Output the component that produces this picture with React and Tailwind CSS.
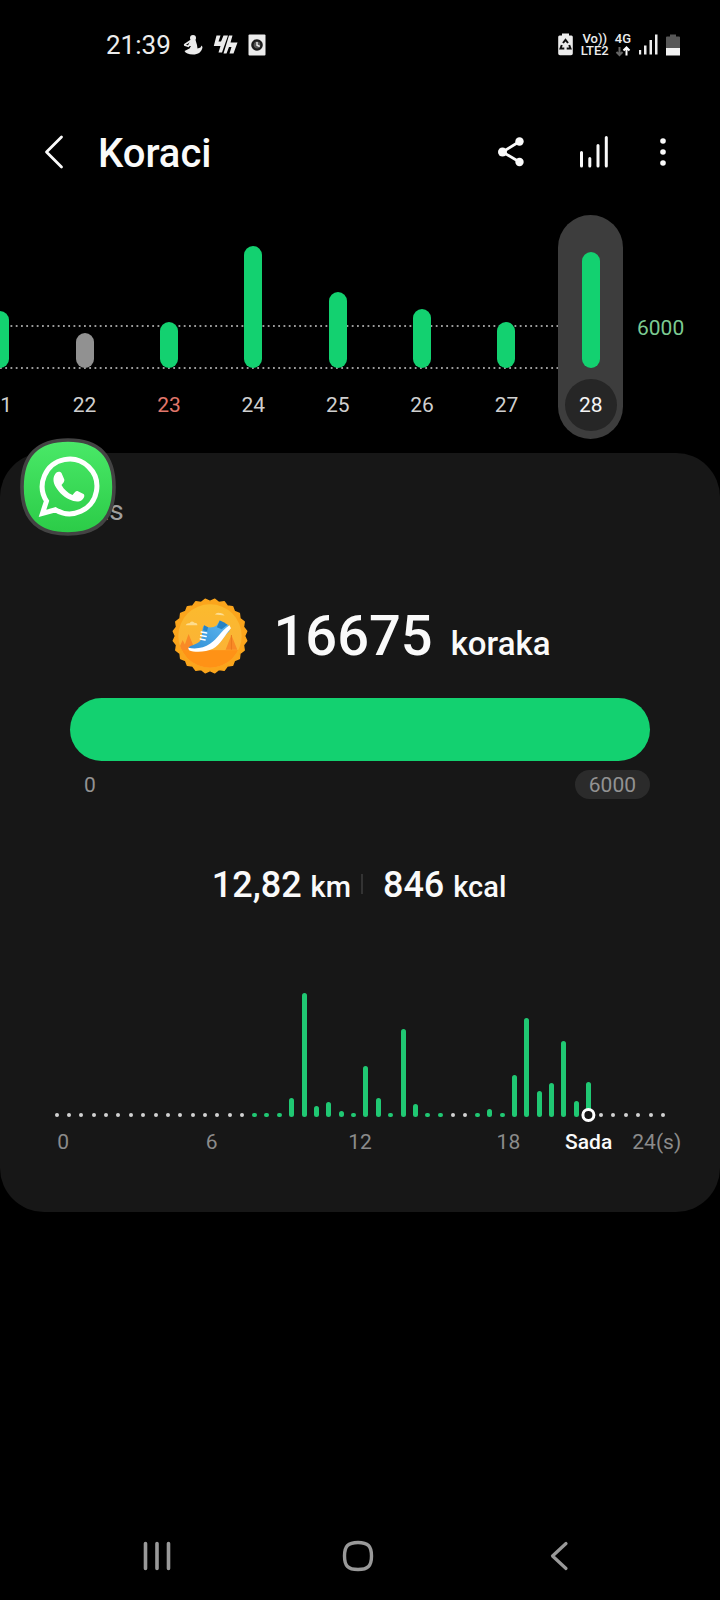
import React, { useState } from 'react';

const days = [
  { day: 21, height: 57 },
  { day: 22, height: 35, missed: true },
  { day: 23, height: 46, sunday: true },
  { day: 24, height: 122 },
  { day: 25, height: 76 },
  { day: 26, height: 59 },
  { day: 27, height: 46 },
  { day: 28, height: 116 },
];

// bar heights for the day, 0 means no steps in that slot
const slots = [
  0, 0, 0, 0, 0, 0, 0, 0, 0, 0, 0, 0, 0, 0, 0, 0,
  4, 4, 4, 19, 124, 11, 15, 6, 4, 51, 19, 4, 88, 13, 4, 4,
  0, 0, 4, 8, 4, 42, 99, 26, 34, 76, 16, 35,
  0, 0, 0, 0, 0, 0,
];
const nowSlot = 43;

function StatusBar() {
  return (
    <div className="h-[87px] pt-0.5 flex items-center justify-between pl-[106px] pr-10 text-[#ececec]">
      <div className="flex items-center">
        <span className="text-[26px] leading-8">21:39</span>
        <svg className="ml-3 w-5 h-[22px]" viewBox="0 0 20 22" fill="currentColor">
          <circle cx="10" cy="4" r="3" />
          <path d="M7.500 6 L12.500 6 L14 11 L14.500 14.500 L17.500 13.500 L18.500 11.500 L19.500 13 C19 18 15 20.500 10 20.500 C5.500 20.500 2.500 19 1.500 17 L6.500 14.500 L8 12 L4.500 12.500 Z" />
          <path d="M1.200 11 L8 6.500 M1.200 11 L6 12.500" fill="none" stroke="currentColor" strokeWidth="1.800" />
        </svg>
        <svg className="ml-2.5 w-[25px] h-[22px]" viewBox="0 0 25 22" fill="currentColor">
          <path d="M3.500 1.500 H7.500 L5.500 7.500 H8 L10.500 1.500 H15 L9 18.500 H5.500 L7.500 12 H0.800 Z" />
          <path d="M16 1.500 L10.500 19.500 H13.500 L16 13 H18.500 L16.500 19.500 H20.500 L24.500 8.500 H17.500 L19.500 1.500 Z" />
        </svg>
        <svg className="ml-2.5 w-[18px] h-[22px]" viewBox="0 0 18 22">
          <rect x="0.500" y="0.500" width="17" height="21" rx="1" fill="#ececec" />
          <circle cx="9" cy="11" r="5.800" fill="#1c1c1c" />
          <circle cx="9" cy="11" r="3.400" fill="#555" />
          <path d="M9 8 V11.200 L11.800 12.500" fill="none" stroke="#ececec" strokeWidth="1.400" />
        </svg>
      </div>
      <div className="flex items-center">
        <svg className="w-[15px] h-[23px]" viewBox="0 0 15 23">
          <path d="M4 0.500 H11 V2.500 H13.500 Q14.800 2.500 14.800 4 V20.500 Q14.800 22.300 13 22.300 H2 Q0.200 22.300 0.200 20.500 V4 Q0.200 2.500 1.500 2.500 H4 Z" fill="#ececec" />
          <g fill="none" stroke="#111" strokeWidth="2">
            <path d="M5 10 L7.500 6.800 L10 10" />
            <path d="M3.800 12 L2.500 15.500 H6.300" />
            <path d="M11.200 12 L12.500 15.500 H8.700" />
          </g>
        </svg>
        <div className="ml-2 flex flex-col items-center text-[13px] leading-3 font-medium">
          <span>Vo))</span>
          <span>LTE2</span>
        </div>
        <div className="ml-1.5 flex flex-col items-center">
          <span className="text-[13px] leading-3 font-medium">4G</span>
          <svg className="w-4 h-3" viewBox="0 0 16 12" fill="none" strokeWidth="2">
            <path d="M4.500 2 V10 M1.500 7 L4.500 10 L7.500 7" stroke="#666" />
            <path d="M11.500 10.500 V2.500 M8.500 5.500 L11.500 2.500 L14.500 5.500" stroke="#fff" />
          </svg>
        </div>
        <svg className="ml-2 w-[19px] h-[21px]" viewBox="0 0 19 21" fill="#ececec">
          <rect x="0" y="16" width="2.200" height="4.500" />
          <rect x="5" y="11.500" width="2.500" height="9" />
          <rect x="10.500" y="6" width="2.500" height="14.500" />
          <rect x="16" y="0.500" width="2.500" height="20" />
        </svg>
        <svg className="ml-2 w-3.5 h-[22px]" viewBox="0 0 14 22">
          <path d="M4 0.500 H10 V2.500 H13 Q14 2.500 14 3.500 V14 H0 V3.500 Q0 2.500 1 2.500 H4 Z" fill="#575757" />
          <path d="M0 14 H14 V21.500 H0 Z" fill="#f2f2f2" />
        </svg>
      </div>
    </div>
  );
}

function Header() {
  return (
    <header className="h-32 flex items-center pt-0.5 pl-11 pr-[51px]">
      <button type="button" aria-label="Natrag">
        <svg className="w-5 h-[34px]" viewBox="0 0 20 34" fill="none" stroke="#fafafa" strokeWidth="2.800" strokeLinecap="round" strokeLinejoin="round">
          <path d="M17.500 2 L2.500 17 L17.500 32" />
        </svg>
      </button>
      <h1 className="ml-[34px] pt-1 text-[40px] leading-12 font-medium text-[#fafafa] grow">Koraci</h1>
      <button type="button" aria-label="Dijeli">
        <svg className="w-7 h-[34px]" viewBox="0 0 28 34" fill="#fafafa">
          <path d="M22.500 6.500 L5.500 17 L22.500 27" fill="none" stroke="#fafafa" strokeWidth="2.800" />
          <circle cx="22.500" cy="6.500" r="4.200" />
          <circle cx="5.500" cy="17" r="4.500" />
          <circle cx="22.500" cy="27" r="4.200" />
        </svg>
      </button>
      <button type="button" aria-label="Grafikon" className="ml-[55px]">
        <svg className="w-7 h-[34px]" viewBox="0 0 28 34" stroke="#fafafa" strokeWidth="3" strokeLinecap="round">
          <path d="M1.500 17.500 V31 M9.800 23.500 V31 M18 10.500 V31 M26.300 2.500 V31" />
        </svg>
      </button>
      <button type="button" aria-label="Više opcija" className="ml-[49px]">
        <svg className="w-3 h-[34px]" viewBox="0 0 12 34" fill="#fafafa">
          <circle cx="6" cy="6" r="2.800" />
          <circle cx="6" cy="17" r="2.800" />
          <circle cx="6" cy="28" r="2.800" />
        </svg>
      </button>
    </header>
  );
}

function WeekChart() {
  const [selected, setSelected] = useState(28);

  return (
    <section className="flex overflow-hidden">
      <div className="relative grow -ml-[42px] grid grid-cols-8">
        <svg className="absolute inset-0 w-full h-full" stroke="#9a9a9a" strokeWidth="2" strokeDasharray="1.800 3.450">
          <line x1="0" y1="111" x2="100%" y2="111" />
          <line x1="0" y1="153" x2="100%" y2="153" />
        </svg>
        {/* keeps the dotted lines from running past the last day */}
        <span className="absolute right-0 top-0 w-2.5 h-full bg-black"></span>
        {days.map(d => {
          const active = d.day === selected;
          return (
            <button
              key={d.day}
              type="button"
              onClick={() => setSelected(d.day)}
              className={`relative justify-self-center w-[65px] h-56 pb-2 rounded-full flex flex-col items-center justify-end ${active ? 'bg-[#3d3d3d]' : ''}`}
            >
              <span className={`w-[18px] mb-[11px] rounded-full ${d.missed ? 'bg-[#919191]' : 'bg-[#13d170]'}`} style={{ height: d.height }}></span>
              <span className={`size-13 rounded-full flex items-center justify-center text-[21px] leading-7 ${active ? 'bg-[#262626] text-[#f5f5f5]' : d.sunday ? 'text-[#e2776b]' : 'text-[#cfcfcf]'}`}>
                {d.day}
              </span>
            </button>
          );
        })}
      </div>
      <span className="w-[87px] shrink-0 pl-1 mt-[99px] text-[21px] leading-7 text-[#7ccb92]">6000</span>
    </section>
  );
}

function Badge() {
  const points = Array.from({ length: 48 }, (_, i) => {
    const r = i % 2 ? 35.5 : 38;
    const a = ((i + 1) * Math.PI) / 24;
    return `${39 + r * Math.sin(a)},${39 - r * Math.cos(a)}`;
  }).join(' ');

  return (
    <svg className="w-[76px] h-[76px]" viewBox="0 0 78 78">
      <defs>
        <linearGradient id="shoe" x1="0" y1="1" x2="1" y2="0">
          <stop offset="0" stopColor="#2f8fd6" />
          <stop offset="1" stopColor="#5fb8f0" />
        </linearGradient>
        <linearGradient id="sky" x1="0" y1="0" x2="0" y2="1">
          <stop offset="0" stopColor="#fbbb2c" />
          <stop offset="1" stopColor="#fbb03b" />
        </linearGradient>
        <clipPath id="disc"><circle cx="39" cy="39" r="32.500" /></clipPath>
      </defs>
      <polygon points={points} fill="#fba51c" stroke="#fba51c" strokeWidth="1.500" strokeLinejoin="round" />
      <g clipPath="url(#disc)">
        <rect width="78" height="78" fill="url(#sky)" />
        <path d="M17 37 L24 54 H11 Z M11 43 L16 54 H6 Z M61 38 L67 53 H55 Z" fill="#f98a26" />
        <rect y="53.500" width="78" height="25" fill="#ff9216" />
        <path d="M14 28 Q15 25.500 18 26 Q20 22.500 23 25.500 Q26 25.500 26 28 Z M44 17 Q46 14.500 49 15.500 Q52 15 54 18 Z" fill="#fddc8e" />
      </g>
      <path d="M61 38 V53" stroke="#e8781c" strokeWidth="1" />
      <path d="M17 51 C20 48 26 48 29 44 C32 39 30 31 33 28 C36 31 42 31 46 28 L49 23 L58 28 L59 34 C53 39 51 45 43 50 C36 54 24 55 17 51 Z" fill="url(#shoe)" />
      <path d="M49 23 L53 25 L57 27.500 L51 32 L46 30 Z" fill="#2582c4" />
      <path d="M33 28 L37 30 L36 34 L32 33 Z" fill="#2582c4" />
      <path d="M16.500 51 C25 53 33 51 39 47 C47 42 49 35 59 28 L60.500 31 C54 38 50 48 42 52 C35 55.500 23 56 17.500 53.500 Z" fill="#fff" />
      <path d="M30 35 L35.500 36 M29.500 38.500 L35 39.500 M29 42 L34 43" stroke="#fff" strokeWidth="1.600" strokeLinecap="round" />
    </svg>
  );
}

function HourChart() {
  const labels = ['0', '6', '12', '18', '24(s)'];

  return (
    <div className="mt-[86px]">
      <div className="h-[124px] mx-[54px] flex items-end justify-between">
        {slots.map((h, i) => (
          <span key={i} className="relative w-[5px] flex justify-center">
            {h > 0
              ? <span className="w-[5px] rounded-full bg-[#20c873]" style={{ height: h }}></span>
              : <span className="size-1 rounded-full bg-[#d2d2d2]"></span>}
            {i === nowSlot && (
              <span className="absolute -bottom-[39px] left-1/2 -translate-x-1/2 flex flex-col items-center gap-1.5">
                <span className="size-3.5 rounded-full border-3 border-white bg-[#171717]"></span>
                <span className="text-[21px] leading-7 font-medium text-[#fafafa]">Sada</span>
              </span>
            )}
          </span>
        ))}
      </div>
      <div className="mt-[11px] -mx-[11px] grid grid-cols-5 text-center text-[21px] leading-7 text-[#8b8b8b]">
        {labels.map(l => <span key={l}>{l}</span>)}
      </div>
    </div>
  );
}

function WhatsAppBubble() {
  return (
    <button type="button" aria-label="WhatsApp" className="absolute left-5 top-[438px]">
      <svg className="w-24 h-[98px]" viewBox="0 0 96 98">
        <defs>
          <linearGradient id="wa" x1="0" y1="0" x2="0" y2="1">
            <stop offset="0" stopColor="#4ae968" />
            <stop offset="1" stopColor="#2bcb47" />
          </linearGradient>
        </defs>
        <path d="M48 2 C78 2 94 17 94 49 C94 81 78 96 48 96 C18 96 2 81 2 49 C2 17 18 2 48 2 Z" fill="url(#wa)" stroke="#434343" strokeWidth="3.600" />
        <path d="M26.500 63 A27.300 27.300 0 1 1 35.500 71.800 L22.500 75.300 Z" fill="none" stroke="#fff" strokeWidth="5" strokeLinejoin="miter" />
        <path d="M36.500 34.500 C38 33.300 40.500 33.500 41.500 35 L44.300 41.500 C44.800 43.300 43.300 45 41.500 47 C44 51.500 47.500 54.800 52.500 57 C54.500 55 55.500 52.800 57.500 53 L63.500 56 C65.200 57.200 64 60.500 62 62 C58.500 64.500 54 63.500 49.500 61.500 C42.500 58.500 37.500 52.800 34.800 47.300 C32.700 42.800 33 37.500 36.500 34.500 Z" fill="#fff" />
      </svg>
    </button>
  );
}

function NavBar() {
  return (
    <nav className="mt-auto h-[88px] pl-14 pr-[60px] grid grid-cols-3 items-center justify-items-center">
      <button type="button" aria-label="Nedavno">
        <svg className="w-8 h-8" viewBox="0 0 32 32" stroke="#999" strokeWidth="3.600" strokeLinecap="round">
          <path d="M4.500 3.500 V28.500 M16 3.500 V28.500 M27.500 3.500 V28.500" />
        </svg>
      </button>
      <button type="button" aria-label="Početna">
        <svg className="w-8 h-8" viewBox="0 0 32 32" fill="none" stroke="#999" strokeWidth="3.400">
          <path d="M16 2.500 C26 2.500 29.500 6 29.500 16 C29.500 26 26 29.500 16 29.500 C6 29.500 2.500 26 2.500 16 C2.500 6 6 2.500 16 2.500 Z" />
        </svg>
      </button>
      <button type="button" aria-label="Natrag">
        <svg className="w-8 h-8" viewBox="0 0 32 32" fill="none" stroke="#999" strokeWidth="3.200" strokeLinecap="round" strokeLinejoin="round">
          <path d="M23 3.500 L9.500 16 L23 28.500" />
        </svg>
      </button>
    </nav>
  );
}

export default function App() {
  return (
    <div className="relative min-h-screen flex flex-col bg-black font-[Roboto,sans-serif]">
      <StatusBar />
      <Header />
      <WeekChart />

      <main className="mt-3.5 pt-10 pb-14 rounded-[44px] bg-[#171717] overflow-hidden">
        <h2 className="pl-[45px] text-[28px] leading-9 text-[#a0a0a0]">Danas</h2>

        <div className="mt-[69px] pl-0.5 flex items-center justify-center gap-[26px]">
          <Badge />
          <p className="flex items-baseline gap-[18px] text-[#fafafa] font-medium">
            <span className="text-[56px] leading-14">16675</span>
            <span className="text-[33px] leading-10">koraka</span>
          </p>
        </div>

        <div className="mt-6 mx-[70px]">
          <div role="progressbar" aria-label="Koraci" aria-valuemin={0} aria-valuemax={6000} aria-valuenow={6000} className="h-[63px] rounded-full bg-[#13d170]"></div>
          <div className="mt-[9px] flex items-center justify-between text-[21px] leading-[27px] text-[#929292]">
            <span className="pt-0.5 pl-3.5">0</span>
            <span className="pt-0.5 px-3.5 rounded-full bg-[#2b2b2b]">6000</span>
          </div>
        </div>

        <div className="mt-[66px] pr-0.5 flex items-center justify-center text-[#fafafa] font-medium text-[36px] leading-10">
          <p>12,82 <span className="text-[29px]">km</span></p>
          <span className="ml-2.5 mr-5 mb-1 w-0.5 h-5 bg-[#333]"></span>
          <p>846 <span className="text-[29px]">kcal</span></p>
        </div>

        <HourChart />
      </main>

      <WhatsAppBubble />

      <NavBar />
    </div>
  );
}
